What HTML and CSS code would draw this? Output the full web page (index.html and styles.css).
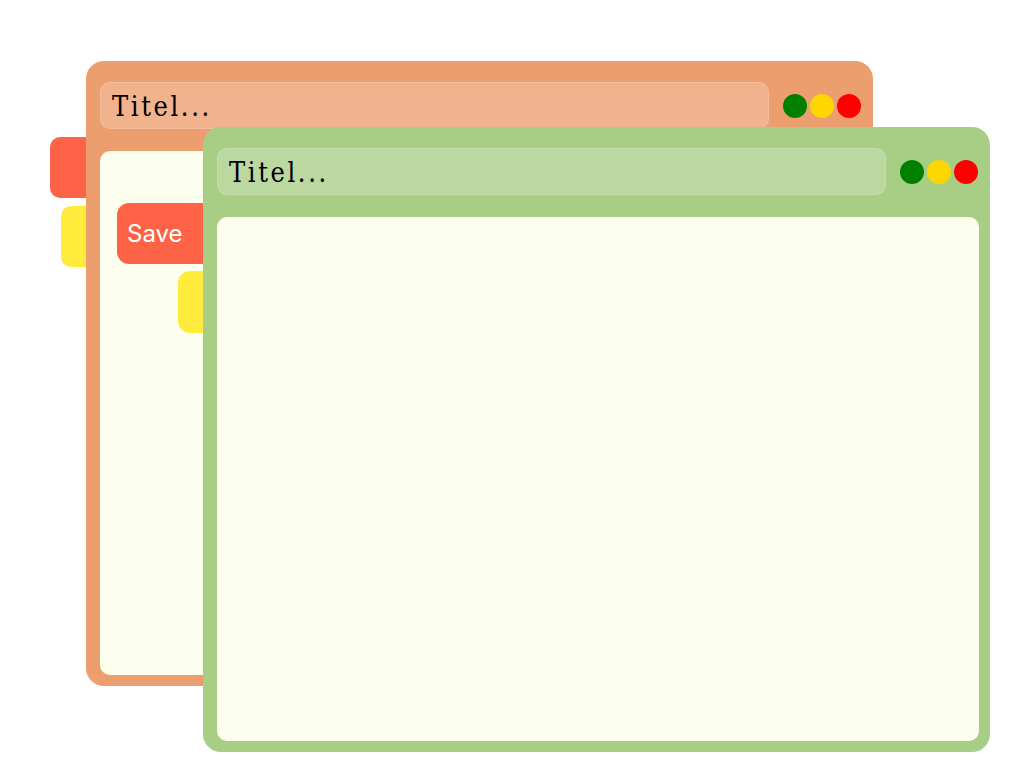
FILE: index.html
```html
<!DOCTYPE html>
<html>
<head>
<meta charset="utf-8">
<link rel="stylesheet" href="styles.css">
</head>
<body>
<div class="desktop">
  <div class="chip chip-red"></div>
  <div class="chip chip-yellow"></div>

  <div class="window window-orange">
    <div class="win-header">
      <div class="title-bar"><span class="title">Titel...</span></div>
      <div class="dots">
        <span class="dot dot-green"></span>
        <span class="dot dot-yellow"></span>
        <span class="dot dot-red"></span>
      </div>
    </div>
    <div class="win-content">
      <button class="btn-save">Save</button>
      <div class="block-yellow"></div>
    </div>
  </div>

  <div class="window window-green">
    <div class="win-header">
      <div class="title-bar"><span class="title">Titel...</span></div>
      <div class="dots">
        <span class="dot dot-green"></span>
        <span class="dot dot-yellow"></span>
        <span class="dot dot-red"></span>
      </div>
    </div>
    <div class="win-content"></div>
  </div>
</div>
</body>
</html>
```
FILE: styles.css
```css
html, body {
  margin: 0;
  padding: 0;
  background: #ffffff;
}

.desktop {
  position: relative;
  width: 1023px;
  height: 761px;
  overflow: hidden;
}

.chip {
  position: absolute;
  border-radius: 10px;
}

.chip-red {
  left: 50px;
  top: 137px;
  width: 80px;
  height: 61px;
  background: #ff6347;
}

.chip-yellow {
  left: 61px;
  top: 206px;
  width: 80px;
  height: 61px;
  background: #ffeb3b;
}

.window {
  position: absolute;
  width: 787px;
  height: 625px;
  box-sizing: border-box;
  padding: 21px 11px 11px 14px;
  border-radius: 18px;
  display: flex;
  flex-direction: column;
  gap: 22px;
}

.window-orange {
  left: 86px;
  top: 61px;
  background: #ed9e6f;
}

.window-green {
  left: 203px;
  top: 127px;
  background: #a8ce86;
}

.win-header {
  display: flex;
  align-items: center;
  gap: 14px;
  padding-right: 1px;
}

.title-bar {
  flex: 1;
  height: 47px;
  box-sizing: border-box;
  border-radius: 10px;
  background: rgba(255, 255, 255, 0.22);
  border: 1px solid rgba(255, 255, 255, 0.15);
  display: flex;
  align-items: center;
  padding-left: 11px;
}

.title {
  font-family: "DejaVu Serif", "Liberation Serif", serif;
  font-stretch: condensed;
  font-variant-ligatures: none;
  font-size: 27px;
  letter-spacing: 2.6px;
  color: #000000;
  line-height: 1;
  margin-top: 1px;
}

.dots {
  display: flex;
  gap: 3px;
}

.dot {
  width: 24px;
  height: 24px;
  border-radius: 50%;
}

.dot-green { background: #008000; }
.dot-yellow { background: #ffd700; }
.dot-red { background: #ff0000; }

.win-content {
  flex: 1;
  background: #fdffee;
  border-radius: 10px;
  padding: 52px 0 0 17px;
  box-sizing: border-box;
}

.btn-save {
  display: block;
  width: 110px;
  height: 61px;
  border: none;
  border-radius: 12px;
  background: #ff6347;
  color: #ffffff;
  font-family: Inter, "Noto Sans", sans-serif;
  font-size: 24px;
  text-align: left;
  padding: 0 0 0 10px;
  margin: 0;
}

.block-yellow {
  width: 80px;
  height: 62px;
  margin: 7px 0 0 61px;
  border-radius: 12px;
  background: #ffeb3b;
}
```
